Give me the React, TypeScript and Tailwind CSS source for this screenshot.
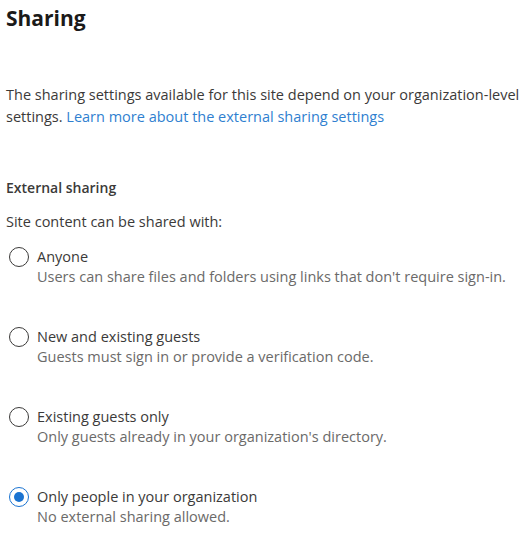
import React from "react";

const options = [
  { title: "Anyone", desc: "Users can share files and folders using links that don't require sign-in.", checked: false },
  { title: "New and existing guests", desc: "Guests must sign in or provide a verification code.", checked: false },
  { title: "Existing guests only", desc: "Only guests already in your organization's directory.", checked: false },
  { title: "Only people in your organization", desc: "No external sharing allowed.", checked: true },
];

export default function App() {
  return (
    <div
      className="w-[530px] h-[539px] bg-white pl-[6px] pt-[4px] text-[#3b3a39] overflow-hidden"
      style={{ fontFamily: '"Open Sans", "Noto Sans", sans-serif' }}
    >
      <h1 className="text-[21px] leading-[28px] font-bold text-[#1b1a19]">Sharing</h1>
      <p className="mt-[52px] text-[14.5px] leading-[22px] whitespace-nowrap">
        The sharing settings available for this site depend on your organization-level
        <br />
        settings. <span className="text-[#2f7fd0]">Learn more about the external sharing settings</span>
      </p>
      <div className="mt-[50px] text-[14px] leading-[20px] font-semibold">External sharing</div>
      <div className="mt-[14px] text-[14.5px] leading-[20px]">Site content can be shared with:</div>
      <div className="mt-[15px] flex flex-col gap-[40px]">
        {options.map((o) => (
          <div key={o.title} className="flex flex-col">
            <div className="flex items-center gap-[8px] pl-[3px]">
              <span
                className={
                  o.checked
                    ? "w-[20px] h-[20px] rounded-full border-[1.5px] border-[#1a73d1] flex items-center justify-center"
                    : "w-[20px] h-[20px] rounded-full border-[1.5px] border-[#3b3a39]"
                }
              >
                {o.checked && <span className="w-[10px] h-[10px] rounded-full bg-[#1a73d1]" />}
              </span>
              <span className="text-[14.5px] leading-[20px]">{o.title}</span>
            </div>
            <div className="pl-[31px] text-[14.5px] leading-[20px] text-[#6b6a69] whitespace-nowrap">{o.desc}</div>
          </div>
        ))}
      </div>
    </div>
  );
}
